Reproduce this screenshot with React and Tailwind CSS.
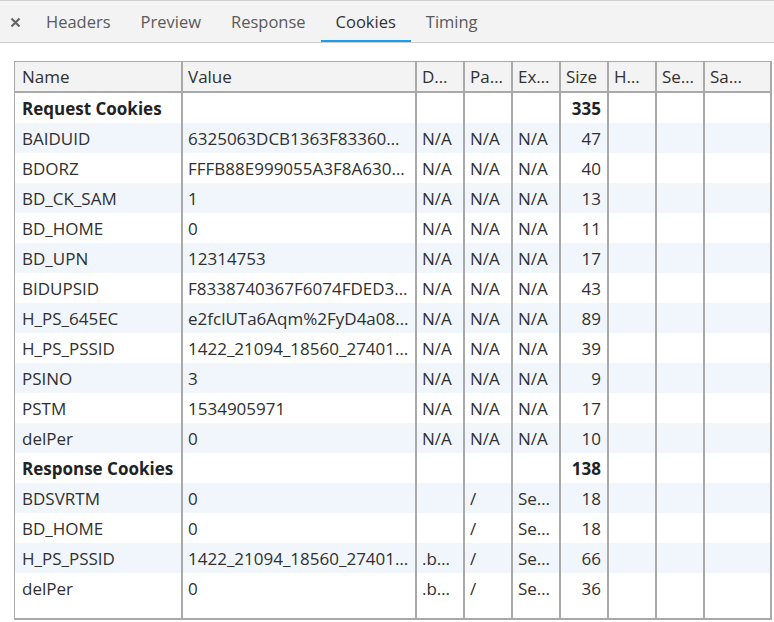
import React from "react";

const cols = ["Name", "Value", "D…", "Pa…", "Ex…", "Size", "H…", "Se…", "Sa…"];

const rows = [
  { group: true, name: "Request Cookies", size: "335" },
  { name: "BAIDUID", value: "6325063DCB1363F83360…", d: "N/A", p: "N/A", e: "N/A", size: "47" },
  { name: "BDORZ", value: "FFFB88E999055A3F8A630…", d: "N/A", p: "N/A", e: "N/A", size: "40" },
  { name: "BD_CK_SAM", value: "1", d: "N/A", p: "N/A", e: "N/A", size: "13" },
  { name: "BD_HOME", value: "0", d: "N/A", p: "N/A", e: "N/A", size: "11" },
  { name: "BD_UPN", value: "12314753", d: "N/A", p: "N/A", e: "N/A", size: "17" },
  { name: "BIDUPSID", value: "F8338740367F6074FDED3…", d: "N/A", p: "N/A", e: "N/A", size: "43" },
  { name: "H_PS_645EC", value: "e2fclUTa6Aqm%2FyD4a08…", d: "N/A", p: "N/A", e: "N/A", size: "89" },
  { name: "H_PS_PSSID", value: "1422_21094_18560_27401…", d: "N/A", p: "N/A", e: "N/A", size: "39" },
  { name: "PSINO", value: "3", d: "N/A", p: "N/A", e: "N/A", size: "9" },
  { name: "PSTM", value: "1534905971", d: "N/A", p: "N/A", e: "N/A", size: "17" },
  { name: "delPer", value: "0", d: "N/A", p: "N/A", e: "N/A", size: "10" },
  { group: true, name: "Response Cookies", size: "138" },
  { name: "BDSVRTM", value: "0", d: "", p: "/", e: "Se…", size: "18" },
  { name: "BD_HOME", value: "0", d: "", p: "/", e: "Se…", size: "18" },
  { name: "H_PS_PSSID", value: "1422_21094_18560_27401…", d: ".b…", p: "/", e: "Se…", size: "66" },
  { name: "delPer", value: "0", d: ".b…", p: "/", e: "Se…", size: "36" },
];

const grid = "grid grid-cols-[166px_234px_48px_48px_48px_48px_48px_48px_67px]";

function Cell({ children, first, right, bold, h = "h-[30px]", pt = "pt-[2px]" }) {
  return (
    <div
      className={`${h} flex items-center overflow-hidden whitespace-nowrap ${pt} ${
        first ? "pl-[7px]" : "border-l-2 border-[#a9a9a9] pl-[5px]"
      } ${right ? "justify-end pr-[6px]" : "pr-[1px]"} ${bold ? "font-bold text-[#222]" : ""}`}
    >
      {children}
    </div>
  );
}

export default function App() {
  const tabs = ["Headers", "Preview", "Response", "Cookies", "Timing"];
  return (
    <div
      className="w-[774px] h-[622px] bg-white overflow-hidden text-[#303030] text-[17px]"
      style={{ fontFamily: '"Open Sans", "Noto Sans", sans-serif' }}
    >
      <div className="h-[43px] bg-[#f3f3f3] border-t border-[#cfcfcf] border-b border-b-[#cccccc] flex items-stretch text-[16.5px]">
        <div className="w-[31px] flex items-center justify-center pt-[1px]">
          <svg width="11" height="11" viewBox="0 0 11 11">
            <path d="M1.5 1.5 L9.5 9.5 M9.5 1.5 L1.5 9.5" stroke="#666" strokeWidth="2.2" />
          </svg>
        </div>
        {tabs.map((t) => (
          <div
            key={t}
            className={`px-[15px] pt-[3px] flex items-center text-[#5a5a5a] border-b-2 ${
              t === "Cookies" ? "border-[#1a9ff0]" : "border-transparent"
            }`}
          >
            <span className={t === "Cookies" ? "text-[#333]" : ""}>{t}</span>
          </div>
        ))}
      </div>

      <div className="ml-[14px] mt-[18px] w-[758px] border-l border-t border-[#a9a9a9] border-r-2 border-b-2 border-r-[#a9a9a9] border-b-[#a9a9a9]">
        <div className={`${grid} bg-[#f3f3f3] border-b-2 border-[#a9a9a9]`}>
          {cols.map((c, i) => (
            <Cell key={c} first={i === 0} h="h-[29px]" pt="pt-[1px]">
              {c}
            </Cell>
          ))}
        </div>
        {rows.map((r, idx) => (
          <div key={idx} className={`${grid} ${idx % 2 === 1 ? "bg-[#f1f6fd]" : "bg-white"}`}>
            <Cell first bold={r.group}>{r.name}</Cell>
            <Cell>{r.value}</Cell>
            <Cell>{r.d}</Cell>
            <Cell>{r.p}</Cell>
            <Cell>{r.e}</Cell>
            <Cell right bold={r.group}>{r.size}</Cell>
            <Cell />
            <Cell />
            <Cell />
          </div>
        ))}
        <div className={grid}>
          {cols.map((c, i) => (
            <Cell key={c} first={i === 0} h="h-[15px]" pt="pt-0" />
          ))}
        </div>
      </div>
    </div>
  );
}
